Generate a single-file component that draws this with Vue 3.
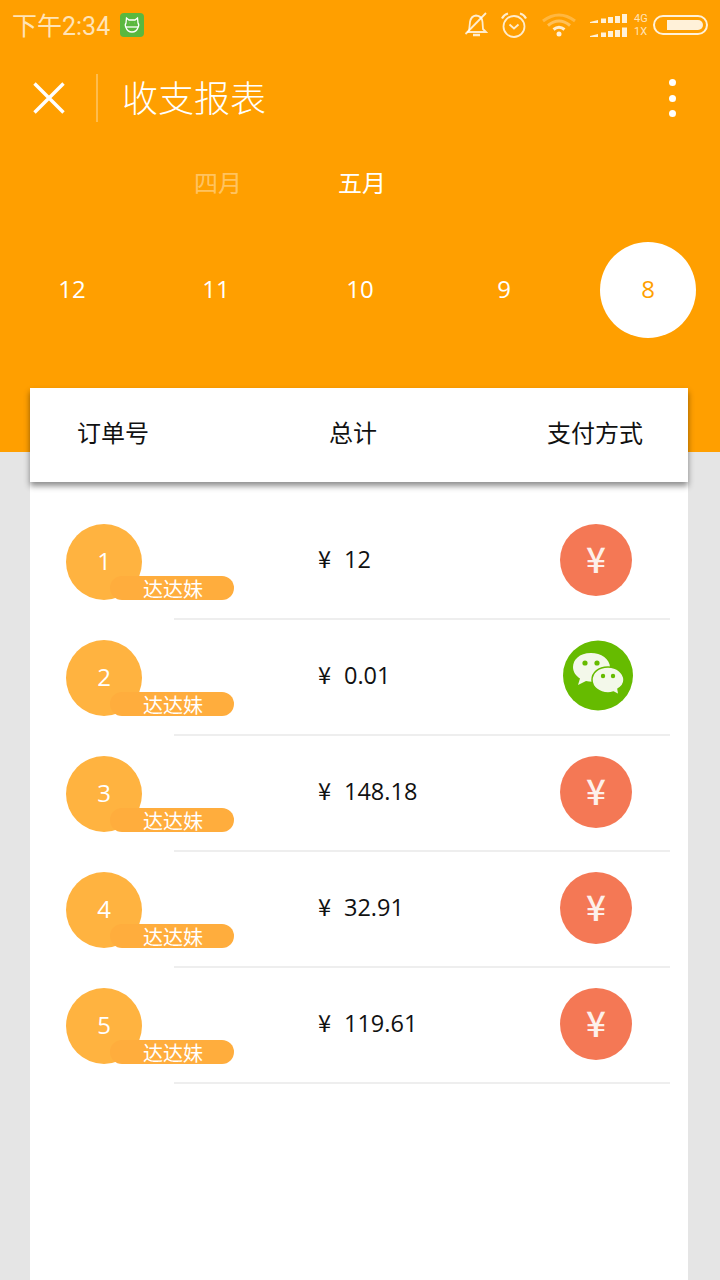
<script setup>
const dates = [12, 11, 10, 9, 8]
const rows = [
  { id: 1, amount: '12', pay: 'cash' },
  { id: 2, amount: '0.01', pay: 'wechat' },
  { id: 3, amount: '148.18', pay: 'cash' },
  { id: 4, amount: '32.91', pay: 'cash' },
  { id: 5, amount: '119.61', pay: 'cash' }
]
</script>

<template>
  <div class="page">
    <section class="hero">
      <div class="status">
        <span class="time">下午2:34</span>
        <span class="app-icon">
          <svg width="18" height="18" viewBox="0 0 18 18" fill="none" stroke="#fff" stroke-width="1.300">
            <path d="M3.500 2 L6 4 H12 L14.500 2 L15 7 Q16.500 9 15 11.500 Q13.500 16 9 16 Q4.500 16 3 11.500 Q1.500 9 3 7 Z" />
            <path d="M2.500 11 H15.500" />
            <path d="M6.500 7 h.1 M11.500 7 h.1" stroke-width="2" />
          </svg>
        </span>
        <span class="status-right">
          <svg class="s-bell" width="24" height="26" viewBox="0 0 24 26" fill="none" stroke="#fff" stroke-opacity=".8" stroke-width="1.800">
            <path d="M5 19 L6 10 Q7 4 12 3.500 Q18 4 18.500 10 L19 17 L22 20 H3" />
            <path d="M9 23 H16" stroke-width="2.500" />
            <path d="M1.500 22 L22 1" />
          </svg>
          <svg class="s-alarm" width="28" height="26" viewBox="0 0 28 26" fill="none" stroke="#fff" stroke-opacity=".8" stroke-width="1.800">
            <circle cx="14" cy="14.500" r="10.500" />
            <path d="M9.500 12.500 L14 16.500 L18.500 12.500" />
            <path d="M2 6.500 Q4 2.500 8 1.500 M20 1.500 Q24 2.500 26 6.500" stroke-width="2.200" />
          </svg>
          <svg class="s-wifi" width="34" height="24" viewBox="0 0 34 24" fill="none" stroke="#fff">
            <path d="M1 8 Q17 -4 33 8" stroke-width="3" stroke-opacity=".25" />
            <path d="M6 12.500 Q17 3.500 28 12.500" stroke-width="3" stroke-opacity=".35" />
            <path d="M11.500 16.500 Q17 12 22.500 16.500" stroke-width="3" stroke-opacity=".8" />
            <circle cx="17" cy="21" r="2.500" fill="#fff" fill-opacity=".85" stroke="none" />
          </svg>
          <svg class="s-signal" width="38" height="24" viewBox="0 0 38 24" fill="#fff" fill-opacity=".85">
            <path d="M0 9 L8 7 V10 H0 Z M11 5.500 H16 V10 H11 Z M18 4 H23 V10 H18 Z M25 3 H30 V10 H25 Z M32 1 H37 V10 H32 Z" />
            <path d="M0 23 L8 21 V24 H0 Z M11 19.500 H16 V24 H11 Z M18 18 H23 V24 H18 Z M25 17 H30 V24 H25 Z M32 14.500 H37 V24 H32 Z" />
          </svg>
          <span class="net"><span>4G</span><span>1X</span></span>
          <span class="battery"><span class="battery-fill"></span></span>
        </span>
      </div>

      <header class="bar">
        <svg class="close" width="32" height="32" viewBox="0 0 32 32" stroke="#fff" stroke-width="3.400" fill="none">
          <path d="M1.500 1.500 L30.500 30.500 M30.500 1.500 L1.500 30.500" />
        </svg>
        <span class="bar-line"></span>
        <h1 class="title">收支报表</h1>
        <span class="dots"><i></i><i></i><i></i></span>
      </header>

      <div class="months">
        <span class="month dim">四月</span>
        <span class="month">五月</span>
      </div>

      <div class="dates">
        <span v-for="d in dates" :key="d" class="date" :class="{ active: d === 8 }">{{ d }}</span>
      </div>
    </section>

    <div class="thead">
      <span>订单号</span>
      <span>总计</span>
      <span>支付方式</span>
    </div>

    <section class="list">
      <div v-for="r in rows" :key="r.id" class="row">
        <div class="cells">
          <div class="order-col">
            <div class="badge">
              {{ r.id }}
              <span class="tag">达达妹</span>
            </div>
          </div>
          <div class="amount"><span class="yen">¥</span>{{ r.amount }}</div>
          <div v-if="r.pay === 'cash'" class="pay cash">¥</div>
          <svg v-else class="pay wechat" width="70" height="72" viewBox="0 0 70 72">
            <circle cx="35" cy="35.500" r="35" fill="#66bb00" />
            <path d="M28 13 C16 13 10 20 10 27 C10 32 13 36 17 38.500 L15 45 L23 41 C25 41.500 27 41.800 29 41.800 C41 41.800 47 34.500 47 27.500 C47 19 38 13 28 13 Z" fill="#f3f8ea" />
            <path d="M45 27 C35 27 29 33 29 40 C29 47 36 53 45 53 C47 53 49 52.500 50.500 52 L56 55 L55 49 C59 46.500 61 43 61 40 C61 33 54 27 45 27 Z" fill="#f3f8ea" stroke="#66bb00" stroke-width="1.500" />
            <circle cx="22" cy="23" r="2.600" fill="#66bb00" />
            <circle cx="34" cy="23" r="2.600" fill="#66bb00" />
            <circle cx="40" cy="36" r="2.200" fill="#66bb00" />
            <circle cx="50" cy="36" r="2.200" fill="#66bb00" />
          </svg>
        </div>
        <div class="rule"></div>
      </div>
    </section>
  </div>
</template>

<style>
html, body { margin: 0; background: #e5e5e5; }
</style>

<style scoped>
.page {
  width: 720px;
  height: 1280px;
  overflow: hidden;
  background: #e5e5e5;
  font-family: "Open Sans", "Noto Sans CJK SC", sans-serif;
  color: #111;
}
.hero {
  height: 452px;
  background: #ff9f00;
  color: #fff;
  overflow: hidden;
}
.status {
  height: 50px;
  padding: 0 12px;
  display: flex;
  align-items: center;
  box-sizing: border-box;
}
.time {
  font-size: 25px;
  font-family: "Roboto", "Noto Sans CJK SC", sans-serif;
  color: rgba(255, 255, 255, .72);
  width: 108px;
  line-height: 52px;
  margin-top: 4px;
  white-space: nowrap;
}
.app-icon {
  width: 24px;
  height: 24px;
  border-radius: 4px;
  background: #5ab83f;
  display: flex;
  align-items: center;
  justify-content: center;
}
.status-right {
  margin-left: auto;
  display: flex;
  align-items: center;
}
.s-bell { margin-right: 12px; }
.s-alarm { margin-right: 14px; }
.s-wifi { margin-right: 14px; }
.s-signal { margin-right: 6px; }
.net {
  display: flex;
  flex-direction: column;
  width: 15px;
  font: 11px/13px "Roboto", sans-serif;
  color: rgba(255, 255, 255, .72);
  margin-right: 4px;
}
.battery {
  width: 55px;
  height: 20px;
  box-sizing: border-box;
  border: 2px solid rgba(255, 255, 255, .85);
  border-radius: 10px;
  padding: 3px 3px 3px 12px;
  display: flex;
}
.battery-fill {
  flex: 1;
  background: rgba(255, 255, 255, .85);
  border-radius: 0 6px 6px 0;
}
.bar {
  height: 96px;
  display: flex;
  align-items: flex-start;
  padding: 24px 44px 0 33px;
  box-sizing: border-box;
}
.close { margin-top: 8px; }
.bar-line {
  width: 2px;
  height: 48px;
  background: rgba(255, 255, 255, .3);
  margin-left: 31px;
}
.title {
  margin: -2px 0 0 24px;
  font-size: 36px;
  font-weight: 300;
  line-height: 48px;
  font-family: "Noto Sans CJK SC", sans-serif;
}
.dots {
  margin-left: auto;
  height: 38px;
  margin-top: 5px;
  display: flex;
  flex-direction: column;
  justify-content: space-between;
}
.dots i {
  display: block;
  width: 7px;
  height: 7px;
  border-radius: 50%;
  background: #fff;
}
.months {
  display: flex;
  padding-left: 146px;
  height: 48px;
  margin-top: 12px;
}
.month {
  width: 144px;
  text-align: center;
  font-size: 24px;
  line-height: 48px;
  font-family: "Noto Sans CJK SC", sans-serif;
}
.dim { color: rgba(255, 255, 255, .4); }
.dates {
  display: grid;
  grid-template-columns: repeat(5, 144px);
  margin-top: 36px;
}
.date {
  justify-self: center;
  width: 96px;
  height: 96px;
  border-radius: 50%;
  font-size: 24px;
  line-height: 94px;
  text-align: center;
}
.date.active {
  background: #fff;
  color: #ff9f00;
}
.thead {
  position: relative;
  z-index: 1;
  margin: -64px 32px 0 30px;
  height: 94px;
  background: #fff;
  box-shadow: 0 4px 6px rgba(0, 0, 0, .45);
  display: grid;
  grid-template-columns: 252px 218px auto;
  align-items: start;
  padding-left: 47px;
  box-sizing: border-box;
  font-size: 24px;
  font-family: "Noto Sans CJK SC", sans-serif;
  color: #111;
  line-height: 88px;
}
.list {
  margin: 0 32px 0 30px;
  height: 798px;
  padding-top: 22px;
  box-sizing: border-box;
  background: #fff;
}
.row { height: 116px; padding-top: 20px; box-sizing: border-box; }
.cells {
  display: flex;
  height: 94px;
  padding-left: 36px;
}
.order-col { width: 252px; }
.badge {
  position: relative;
  width: 76px;
  height: 76px;
  border-radius: 50%;
  background: #ffb340;
  color: #fff;
  font-size: 24px;
  line-height: 74px;
  text-align: center;
}
.tag {
  position: absolute;
  left: 44px;
  top: 52px;
  width: 124px;
  height: 24px;
  padding-left: 2px;
  box-sizing: border-box;
  border-radius: 12px;
  background: #ffad3d;
  color: #fff;
  font-size: 20px;
  line-height: 26px;
  text-align: center;
  font-family: "Noto Sans CJK SC", sans-serif;
}
.amount {
  width: 242px;
  font-size: 23.500px;
  line-height: 68px;
  color: #111;
}
.yen {
  display: inline-block;
  width: 26px;
  font-family: "Noto Sans CJK SC", sans-serif;
}
.pay { flex: none; }
.cash {
  width: 72px;
  height: 72px;
  border-radius: 50%;
  background: #f47855;
  color: #fdf0ea;
  font-family: "Noto Sans CJK SC", sans-serif;
  font-size: 35px;
  font-weight: 500;
  line-height: 68px;
  text-align: center;
}
.wechat { margin-left: 3px; }
.rule {
  height: 2px;
  margin: 0 18px 0 144px;
  background: #eee;
}
</style>
